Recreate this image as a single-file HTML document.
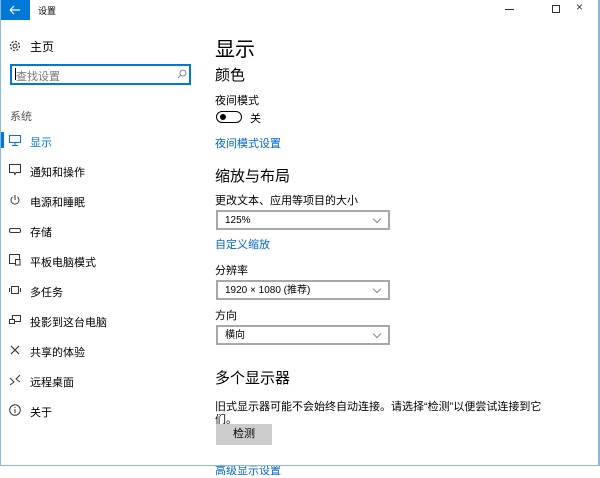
<!DOCTYPE html>
<html><head><meta charset="utf-8"><style>
*{margin:0;padding:0;box-sizing:border-box}
body{width:600px;height:466px;overflow:hidden;background:#fff;font-family:"Liberation Sans","Noto Sans CJK SC",sans-serif;color:#000;position:relative}
.a{position:absolute;white-space:nowrap}
.frame{position:absolute;left:0;top:0;width:600px;height:466px;border-left:1px solid #8cb8e0;border-right:2px solid #8cb8e0;border-bottom:1px solid #8cb8e0;pointer-events:none}
.nav{font-size:11px;color:#000}
.dd{position:absolute;left:216px;width:174px;height:20px;border:2px solid #a8a8a8;font-size:10px;line-height:17px;padding-left:7px}
.dd:after{content:"";position:absolute;right:8px;top:4px;width:5px;height:5px;border-right:1px solid #888;border-bottom:1px solid #888;transform:rotate(45deg)}
.lbl{font-size:11px}
.link{font-size:11px;color:#0066cc}
</style></head><body>
<div class="a" style="left:0;top:0;width:30px;height:20px;background:#0078d7"></div>
<svg class="a" style="left:9px;top:4px" width="12" height="12" viewBox="0 0 12 12"><path d="M1 6H11M1 6L5 2M1 6L5 10" stroke="#fff" stroke-width="1.2" fill="none"/></svg>
<div class="a" style="left:38px;top:4px;font-size:9px">设置</div>
<div class="a" style="left:505px;top:9px;width:9px;height:1px;background:#333"></div>
<div class="a" style="left:552px;top:5px;width:8px;height:8px;border:1px solid #333"></div>
<div class="a" style="left:576px;top:0px;font-size:12px;color:#333">×</div>

<svg class="a" style="left:9px;top:40px" width="12" height="12" viewBox="0 0 12 12"><circle cx="6" cy="6" r="2" stroke="#333" fill="none"/><circle cx="6" cy="6" r="4.5" stroke="#333" stroke-width="1.3" stroke-dasharray="2 1.5" fill="none"/></svg>
<div class="a nav" style="left:30px;top:38px;font-size:12px">主页</div>
<div class="a" style="left:10px;top:64px;width:181px;height:21px;border:2px solid #0078d7"></div>
<div class="a" style="left:16px;top:68px;font-size:11px;color:#777">查找设置</div>
<div class="a" style="left:15px;top:68px;width:1px;height:12px;background:#000"></div>
<svg class="a" style="left:177px;top:69px" width="10" height="10" viewBox="0 0 10 10"><circle cx="6" cy="4" r="3" stroke="#888" fill="none"/><path d="M4 6L1 9" stroke="#888"/></svg>
<div class="a" style="left:10px;top:108px;font-size:11px;color:#555">系统</div>
<div class="a" style="left:1px;top:132px;width:3px;height:16px;background:#0078d7"></div>
<svg class="a" style="left:9px;top:135px" width="12" height="11" viewBox="0 0 12 11"><rect x="0.5" y="0.5" width="11" height="7" stroke="#0078d7" fill="none"/><path d="M6 8V10M3 10.5H9" stroke="#0078d7"/></svg>
<div class="a nav" style="left:30px;top:134px;color:#0078d7">显示</div>

<svg class="a" style="left:9px;top:164px" width="12" height="12" viewBox="0 0 12 12"><path d="M0.5 0.5H11.5V8.5H7L6 10.5L5 8.5H0.5Z" stroke="#333" fill="none"/></svg>
<div class="a nav" style="left:30px;top:164px">通知和操作</div>
<svg class="a" style="left:9px;top:194px" width="12" height="12" viewBox="0 0 12 12"><path d="M3.5 3A4 4 0 1 0 8.5 3M6 1V6" stroke="#333" fill="none"/></svg>
<div class="a nav" style="left:30px;top:194px">电源和睡眠</div>
<div class="a" style="left:9px;top:228px;width:12px;height:5px;border:1px solid #333;border-radius:2px"></div>
<div class="a nav" style="left:30px;top:224px">存储</div>
<svg class="a" style="left:9px;top:254px" width="12" height="12" viewBox="0 0 12 12"><path d="M0.5 0.5H10.5V5M6 9.5H0.5V0.5" stroke="#333" fill="none"/><rect x="6.5" y="5.5" width="4.5" height="5.5" stroke="#333" fill="none"/></svg>
<div class="a nav" style="left:30px;top:254px">平板电脑模式</div>
<svg class="a" style="left:9px;top:285px" width="12" height="10" viewBox="0 0 12 10"><rect x="2.5" y="1.5" width="7" height="7" stroke="#333" fill="none"/><path d="M0.5 3V7M11.5 3V7" stroke="#333"/></svg>
<div class="a nav" style="left:30px;top:284px">多任务</div>
<svg class="a" style="left:9px;top:314px" width="12" height="12" viewBox="0 0 12 12"><rect x="3.5" y="1.5" width="8" height="6" stroke="#333" fill="none"/><rect x="0.5" y="5.5" width="5" height="4" stroke="#333" fill="#fff"/></svg>
<div class="a nav" style="left:30px;top:314px">投影到这台电脑</div>
<svg class="a" style="left:9px;top:344px" width="12" height="12" viewBox="0 0 12 12"><path d="M2 2L10 10M10 2L2 10" stroke="#333" stroke-width="1.2"/></svg>
<div class="a nav" style="left:30px;top:344px">共享的体验</div>
<svg class="a" style="left:9px;top:374px" width="12" height="12" viewBox="0 0 12 12"><path d="M1 4L5 8L1 11M11 1L7 5L11 8" stroke="#333" fill="none"/></svg>
<div class="a nav" style="left:30px;top:374px">远程桌面</div>
<svg class="a" style="left:9px;top:404px" width="12" height="12" viewBox="0 0 12 12"><circle cx="6" cy="6" r="5.3" stroke="#333" fill="none"/><path d="M6 5V9M6 3V4" stroke="#333"/></svg>
<div class="a nav" style="left:30px;top:404px">关于</div>

<div class="a" style="left:215px;top:33px;font-size:20px">显示</div>
<div class="a" style="left:215px;top:64px;font-size:15px">颜色</div>
<div class="a lbl" style="left:215px;top:92px">夜间模式</div>
<div class="a" style="left:216px;top:111px;width:26px;height:12px;border:1.5px solid #000;border-radius:6px"></div>
<div class="a" style="left:220px;top:114px;width:6px;height:6px;border-radius:3px;background:#000"></div>
<div class="a lbl" style="left:250px;top:110px">关</div>
<div class="a link" style="left:215px;top:135px">夜间模式设置</div>
<div class="a" style="left:215px;top:165px;font-size:15px">缩放与布局</div>
<div class="a lbl" style="left:215px;top:192px">更改文本、应用等项目的大小</div>
<div class="dd" style="top:210px">125%</div>
<div class="a link" style="left:215px;top:236px">自定义缩放</div>
<div class="a lbl" style="left:215px;top:262px">分辨率</div>
<div class="dd" style="top:280px">1920 × 1080 (推荐)</div>
<div class="a lbl" style="left:215px;top:307px">方向</div>
<div class="dd" style="top:325px">横向</div>
<div class="a" style="left:215px;top:367px;font-size:15px">多个显示器</div>
<div class="a lbl" style="left:215px;top:398px">旧式显示器可能不会始终自动连接。请选择“检测”以便尝试连接到它</div>
<div class="a lbl" style="left:215px;top:411px">们。</div>
<div class="a" style="left:216px;top:424px;width:56px;height:21px;background:#ccc;font-size:11px;text-align:center;line-height:21px">检测</div>
<div class="a link" style="left:215px;top:462px">高级显示设置</div>
<div class="frame"></div>
</body></html>
